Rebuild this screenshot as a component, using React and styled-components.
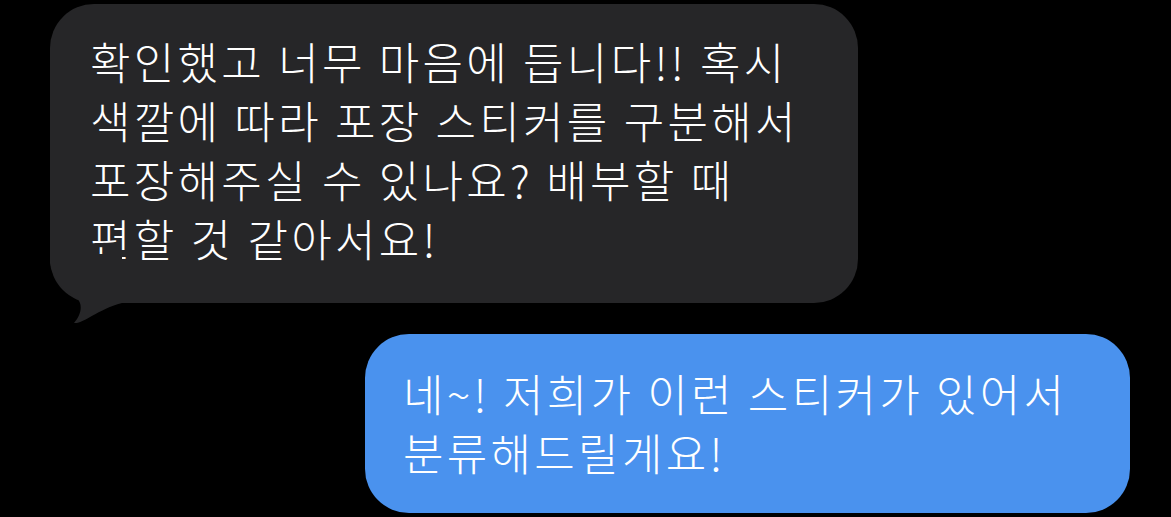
import React from "react";
import styled, { createGlobalStyle } from "styled-components";

const GlobalStyle = createGlobalStyle`
  html, body {
    margin: 0;
    padding: 0;
    background: #000;
  }
  body {
    font-family: "Noto Sans CJK KR", "Noto Sans", sans-serif;
  }
`;

const Thread = styled.div`
  width: 1171px;
  height: 517px;
  background: #000;
  display: flex;
  flex-direction: column;
  padding-top: 4px;
  gap: 31px;
  box-sizing: border-box;
  overflow: hidden;
`;

const Bubble = styled.div`
  position: relative;
  box-sizing: border-box;
  width: ${(p) => p.$width}px;
  height: ${(p) => p.$height}px;
  align-self: ${(p) => (p.$outgoing ? "flex-end" : "flex-start")};
  margin-left: ${(p) => (p.$outgoing ? 0 : 50)}px;
  margin-right: ${(p) => (p.$outgoing ? 41 : 0)}px;
  padding: ${(p) => (p.$outgoing ? "30px 38px 29px 38px" : "28px 40px 31px 40px")};
  background: ${(p) => (p.$outgoing ? "#4A92EE" : "#262628")};
  border-radius: 44px;
  color: #fff;
  font-size: 44px;
  font-weight: 300;
  line-height: 59px;
  letter-spacing: 3.3px;
`;

const Line = styled.div`
  white-space: nowrap;
`;

const Tail = styled.svg`
  position: absolute;
  left: 0;
  top: 250px;
  width: 72px;
  height: 72px;
  overflow: visible;
`;

export default function App() {
  return (
    <>
      <GlobalStyle />
      <Thread>
        <Bubble $width={808} $height={299}>
          <Tail viewBox="0 0 72 72">
            <path
              d="M0 0 L0 9 C3 24 12 36 24 42 C33 47 33 59 24 69 C34 70 46 56 72 49 L72 0 Z"
              fill="#262628"
            />
          </Tail>
          <Line>확인했고 너무 마음에 듭니다!! 혹시</Line>
          <Line>색깔에 따라 포장 스티커를 구분해서</Line>
          <Line>포장해주실 수 있나요? 배부할 때</Line>
          <Line>편할 것 같아서요!</Line>
        </Bubble>
        <Bubble $outgoing $width={765} $height={179}>
          <Line>네~! 저희가 이런 스티커가 있어서</Line>
          <Line>분류해드릴게요!</Line>
        </Bubble>
      </Thread>
    </>
  );
}
